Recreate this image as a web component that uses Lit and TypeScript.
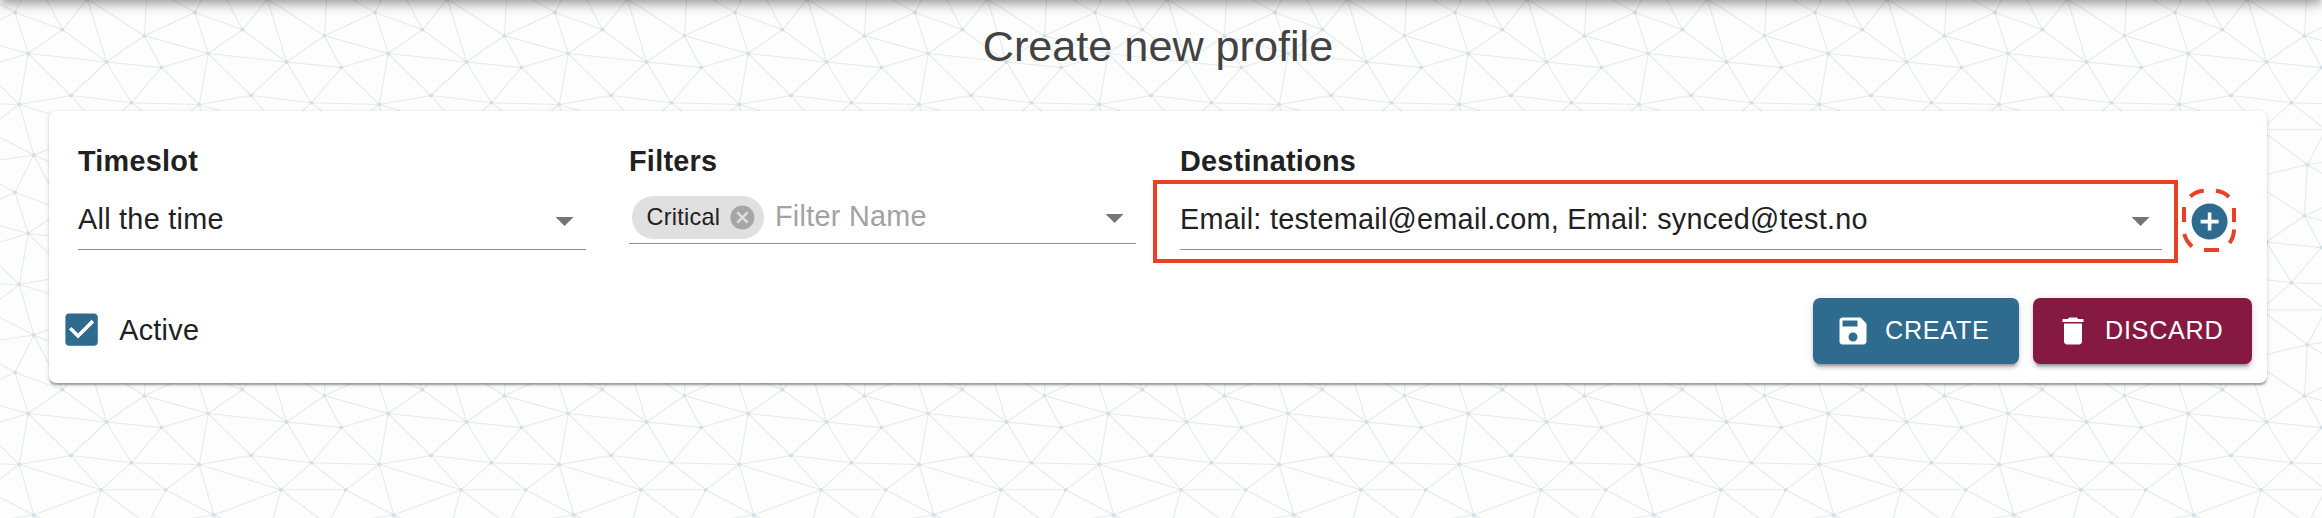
import { LitElement, html, css, svg } from "lit";
import { customElement, property } from "lit/decorators.js";

type Point = [number, number];

const TILE = 180;

// Vertices of the repeating triangle mesh, in tile coordinates.
const NODES: Record<string, Point> = {
  A: [15, 12.5],
  B: [62.5, 29.7],
  C: [144.4, 35.8],
  D: [28.2, 53.5],
  E: [106.5, 62],
  F: [161.4, 67.6],
  G: [71, 95.5],
  H: [131.4, 102.7],
  I: [19.3, 104.5],
  J: [101, 129.8],
  K: [165.8, 129.8],
  L: [33.8, 155],
  M: [147.4, 164.8],
  N: [87.3, 179],
};

// [from, to, tile shift of "to" in x, tile shift of "to" in y]
const EDGES: [string, string, number, number][] = [
  ["A", "B", 0, 0], ["A", "D", 0, 0], ["A", "C", -1, 0], ["A", "M", -1, -1], ["A", "L", 0, -1],
  ["B", "D", 0, 0], ["B", "E", 0, 0], ["B", "N", 0, -1], ["B", "L", 0, -1],
  ["C", "N", 0, -1], ["E", "N", 0, -1], ["C", "M", 0, -1], ["C", "E", 0, 0], ["C", "F", 0, 0], ["C", "D", 1, 0],
  ["D", "G", 0, 0], ["D", "E", 0, 0], ["D", "I", 0, 0], ["D", "F", -1, 0],
  ["E", "G", 0, 0], ["E", "F", 0, 0], ["E", "H", 0, 0],
  ["F", "H", 0, 0], ["F", "I", 1, 0],
  ["G", "I", 0, 0], ["G", "H", 0, 0], ["G", "J", 0, 0],
  ["H", "J", 0, 0], ["H", "K", 0, 0], ["H", "I", 1, 0],
  ["I", "K", -1, 0], ["I", "J", 0, 0], ["I", "L", 0, 0],
  ["J", "K", 0, 0], ["J", "L", 0, 0], ["J", "N", 0, 0], ["J", "M", 0, 0],
  ["K", "M", 0, 0], ["K", "L", 1, 0],
  ["L", "M", -1, 0], ["L", "N", 0, 0], ["M", "N", 0, 0],
];

const SHIFTS = [-1, 0, 1];

const meshPath = SHIFTS.flatMap((sx) =>
  SHIFTS.flatMap((sy) =>
    EDGES.map(([a, b, dx, dy]) => {
      const [x1, y1] = NODES[a];
      const [x2, y2] = NODES[b];
      return `M${x1 + sx * TILE} ${y1 + sy * TILE}L${x2 + (dx + sx) * TILE} ${y2 + (dy + sy) * TILE}`;
    })
  )
).join("");

@customElement("mesh-backdrop")
class MeshBackdrop extends LitElement {
  static styles = css`
    :host { display: block; }
    svg { display: block; width: 100%; height: 100%; }
  `;
  render() {
    return html`<svg aria-hidden="true">
      <defs>
        <pattern id="mesh" width="180" height="180" patternUnits="userSpaceOnUse">
          <path d=${meshPath} fill="none" stroke="#e3ebec" stroke-width="1.1" />
          ${Object.values(NODES).flatMap(([x, y]) =>
            [0, -TILE].map((s) => svg`<circle cx=${x} cy=${y + s} r="1.9" fill="#d3dfe3" />`)
          )}
        </pattern>
      </defs>
      <rect width="100%" height="100%" fill="#fdfdfd" />
      <rect width="100%" height="100%" fill="url(#mesh)" />
    </svg>`;
  }
}

const ICONS: Record<string, string> = {
  arrow: "M7 10l5 5 5-5z",
  cancel:
    "M12 2C6.47 2 2 6.47 2 12s4.47 10 10 10 10-4.47 10-10S17.53 2 12 2zm5 13.59L15.59 17 12 13.41 8.41 17 7 15.59 10.59 12 7 8.41 8.41 7 12 10.59 15.59 7 17 8.41 13.41 12 17 15.59z",
  add: "M12 2C6.48 2 2 6.48 2 12s4.48 10 10 10 10-4.48 10-10S17.52 2 12 2zm5 11h-4v4h-2v-4H7v-2h4V7h2v4h4v2z",
  check:
    "M19 3H5c-1.11 0-2 .9-2 2v14c0 1.1.89 2 2 2h14c1.11 0 2-.9 2-2V5c0-1.1-.89-2-2-2zm-9 14l-5-5 1.41-1.41L10 14.17l7.59-7.59L19 8l-9 9z",
  save: "M17 3H5c-1.11 0-2 .9-2 2v14c0 1.1.89 2 2 2h14c1.1 0 2-.9 2-2V7l-4-4zm-5 16c-1.66 0-3-1.34-3-3s1.34-3 3-3 3 1.34 3 3-1.34 3-3 3zm3-10H5V5h10v4z",
  trash: "M6 19c0 1.1.9 2 2 2h8c1.1 0 2-.9 2-2V7H6v12zM19 4h-3.500l-1-1h-5l-1 1H5v2h14V4z",
};

@customElement("md-icon")
class MdIcon extends LitElement {
  @property() name = "";
  static styles = css`
    :host { display: block; flex: none; width: 43.2px; height: 43.2px; }
    svg { display: block; width: 100%; height: 100%; fill: currentColor; }
  `;
  render() {
    return html`<svg viewBox="0 0 24 24"><path d=${ICONS[this.name]} /></svg>`;
  }
}

@customElement("app-root")
class AppRoot extends LitElement {
  static styles = css`
    :host {
      display: grid;
      height: 518px;
      overflow: hidden;
      color: #212121;
      font-family: "Liberation Sans", Arial, Helvetica, sans-serif;
      font-size: 28.8px;
      letter-spacing: 0.00938em;
      white-space: nowrap;
    }
    mesh-backdrop, .page { grid-area: 1 / 1; min-width: 0; }
    .page { z-index: 1; }
    .appbar {
      height: 115px;
      margin-top: -115px;
      box-shadow:
        0 3.6px 7.2px -1.8px rgba(0, 0, 0, 0.2),
        0 7.2px 9px 0 rgba(0, 0, 0, 0.14),
        0 1.8px 18px 0 rgba(0, 0, 0, 0.12);
      background: #2e6b8e;
    }
    .title {
      margin: 0 6px 19px 0;
      height: 92px;
      line-height: 92px;
      font-size: 43.2px;
      font-weight: 400;
      letter-spacing: 0;
      text-align: center;
      color: #424242;
    }
    .card {
      box-sizing: border-box;
      margin: 0 55px 0 49px;
      height: 272px;
      padding: 33px 15px 0 29px;
      border-radius: 7.2px;
      background: #fff;
      box-shadow:
        0 3.6px 1.8px -1.8px rgba(0, 0, 0, 0.2),
        0 1.8px 1.8px 0 rgba(0, 0, 0, 0.14),
        0 1.8px 5.4px 0 rgba(0, 0, 0, 0.12);
    }
    .columns { display: flex; height: 106px; }
    .slot { width: 508px; margin-right: 43px; }
    .filters { width: 507px; margin-right: 44px; }
    .dest { width: 982px; position: relative; }
    .label { height: 34px; line-height: 34px; font-weight: 700; margin: 0 0 11px; font-size: 28.8px; }
    .field {
      display: flex;
      align-items: center;
      box-sizing: border-box;
      height: 61px;
      border-bottom: 1px solid #8f8f8f;
    }
    .field .value { flex: 1; }
    .field > md-icon { color: #757575; margin-top: 4px; }
    .compact { height: 55px; }
    .compact .hint { flex: 1; color: #a2a2a2; margin-left: 11px; }
    .chip {
      display: flex;
      align-items: center;
      box-sizing: border-box;
      width: 132px;
      height: 43px;
      margin: 3px 0 0 3px;
      padding-left: 14.5px;
      border-radius: 22px;
      background: #e0e0e0;
      font-size: 23.4px;
    }
    .chip md-icon { width: 28.8px; height: 28.8px; margin-left: 7.5px; color: #a6a6a6; }
    .highlight {
      position: absolute;
      box-sizing: border-box;
      left: -27px;
      top: 36px;
      width: 1025px;
      height: 83px;
      border: 4px solid #ea4025;
    }
    .add { position: relative; margin: 55.5px 0 0 26px; color: #2e6b8e; height: 43.2px; }
    .ring {
      position: absolute;
      left: -8px;
      top: -13px;
      width: 60px;
      height: 68px;
      fill: none;
      stroke: #ea4025;
      stroke-width: 4;
    }
    .actions { display: flex; align-items: center; height: 66px; margin-top: 48px; }
    .active { flex: 1; display: flex; align-items: center; margin-left: -18.2px; padding-bottom: 2px; gap: 16.2px; }
    .active md-icon { color: #2e6b8e; }
    .btn {
      display: flex;
      align-items: center;
      box-sizing: border-box;
      height: 66px;
      padding: 0 0 1px 21.6px;
      border: 0;
      border-radius: 7.2px;
      color: #fff;
      font-family: inherit;
      font-size: 25.2px;
      letter-spacing: 0.02857em;
      box-shadow:
        0 5.4px 1.8px -3.6px rgba(0, 0, 0, 0.2),
        0 3.6px 3.6px 0 rgba(0, 0, 0, 0.14),
        0 1.8px 9px 0 rgba(0, 0, 0, 0.12);
    }
    .btn md-icon { width: 36px; height: 36px; margin-right: 14.4px; }
    .create { width: 206px; background: #2e6b8e; }
    .discard { width: 219px; margin-left: 14px; background: #851941; }
  `;

  render() {
    return html`
      <mesh-backdrop></mesh-backdrop>
      <div class="page">
        <div class="appbar"></div>
        <h1 class="title">Create new profile</h1>
        <section class="card">
          <div class="columns">
            <div class="slot">
              <h2 class="label">Timeslot</h2>
              <div class="field"><span class="value">All the time</span><md-icon name="arrow"></md-icon></div>
            </div>
            <div class="filters">
              <h2 class="label">Filters</h2>
              <div class="field compact">
                <span class="chip">Critical<md-icon name="cancel"></md-icon></span>
                <span class="hint">Filter Name</span>
                <md-icon name="arrow"></md-icon>
              </div>
            </div>
            <div class="dest">
              <h2 class="label">Destinations</h2>
              <div class="field">
                <span class="value">Email: testemail@email.com, Email: synced@test.no</span>
                <md-icon name="arrow"></md-icon>
              </div>
              <div class="highlight"></div>
            </div>
            <div class="add">
              <md-icon name="add"></md-icon>
              <svg class="ring" viewBox="2180 186 60 68">
                <path
                  d="M2190.300 195.500Q2196 190.300 2203.800 189.800M2216 189.800Q2224 190.800 2229 196M2184 206V221M2234 207V221M2234 228.500Q2234 236 2229.500 242M2184.300 233Q2186 240 2192 245.500M2204 249H2219"
                />
              </svg>
            </div>
          </div>
          <div class="actions">
            <label class="active"><md-icon name="check"></md-icon>Active</label>
            <button class="btn create"><md-icon name="save"></md-icon>CREATE</button>
            <button class="btn discard"><md-icon name="trash"></md-icon>DISCARD</button>
          </div>
        </section>
      </div>
    `;
  }
}
